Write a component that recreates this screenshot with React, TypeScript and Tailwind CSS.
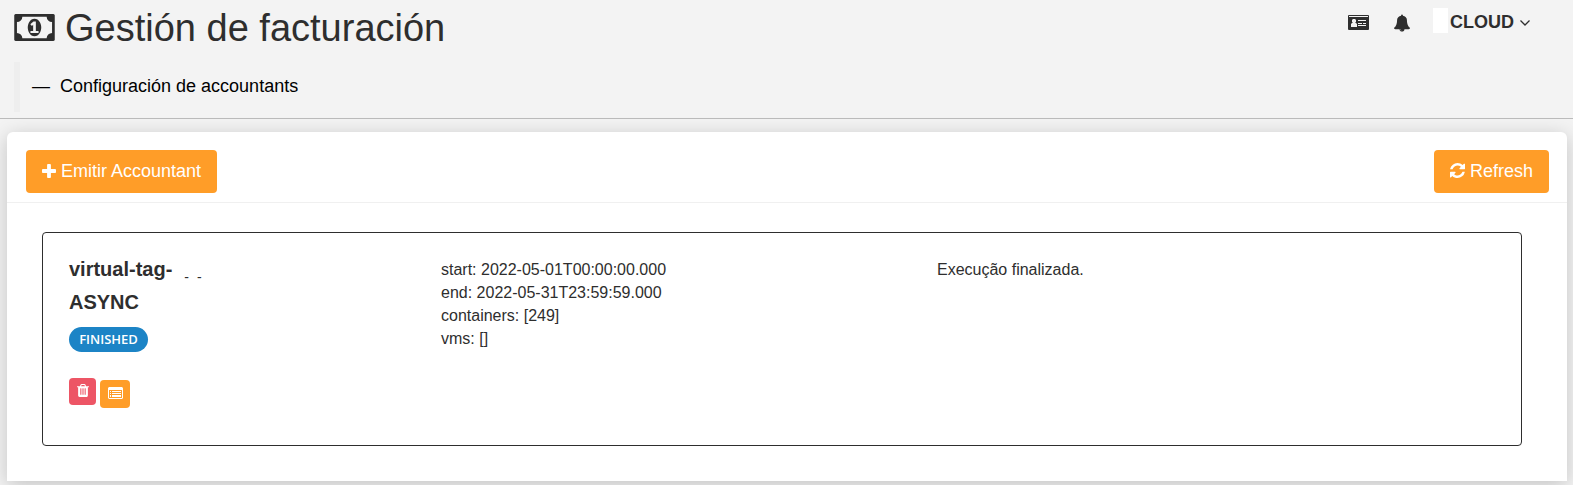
import type { ReactNode } from "react";

type IconProps = { className?: string };

const PATHS = {
  money:
    "M768 1152h384v-96h-128v-448h-114l-148 137 77 80q42-37 55-57h2v288h-128v96zm512-256q0 70-21 142t-59.5 134-101.5 101-138 39-138-39-101.5-101-59.5-134-21-142 21-142 59.5-134 101.5-101 138-39 138 39 101.5 101 59.5 134 21 142zm512 256v-512q-106 0-181-75t-75-181h-1152q0 106-75 181t-181 75v512q106 0 181 75t75 181h1152q0-106 75-181t181-75zm128-832v1152q0 26-19 45t-45 19h-1792q-26 0-45-19t-19-45v-1152q0-26 19-45t45-19h1792q26 0 45 19t19 45z",
  bell: "M912 1696q0-16-16-16-59 0-101.5-42.5t-42.5-101.5q0-16-16-16t-16 16q0 73 51.5 124.5t124.5 51.5q16 0 16-16zm816-288q0 52-38 90t-90 38h-448q0 106-75 181t-181 75-181-75-75-181h-448q-52 0-90-38t-38-90q50-42 91-88t85-119.5 74.5-158.5 50-206 19.5-260q0-152 117-282.5t307-158.5q-8-19-8-39 0-40 28-68t68-28 68 28 28 68q0 20-8 39 190 28 307 158.5t117 282.5q0 139 19.5 260t50 206 74.5 158.5 85 119.5 91 88z",
  refresh:
    "M1639 1056q0 5-1 7-64 268-268 434.5t-478 166.5q-146 0-282.5-55t-243.5-157l-129 129q-19 19-45 19t-45-19-19-45v-448q0-26 19-45t45-19h448q26 0 45 19t19 45-19 45l-137 137q71 66 161 102t187 36q134 0 250-65t186-179q11-17 53-117 8-23 30-23h192q13 0 22.5 9.5t9.5 22.5zm25-800v448q0 26-19 45t-45 19h-448q-26 0-45-19t-19-45 19-45l138-138q-148-137-349-137-134 0-250 65t-186 179q-11 17-53 117-8 23-30 23h-199q-13 0-22.5-9.5t-9.5-22.5v-7q65-268 270-434.5t480-166.5q146 0 284 55.5t245 156.5l130-129q19-19 45-19t45 19 19 45z",
  plus: "M1600 736v192q0 40-28 68t-68 28h-416v416q0 40-28 68t-68 28h-192q-40 0-68-28t-28-68v-416h-416q-40 0-68-28t-28-68v-192q0-40 28-68t68-28h416v-416q0-40 28-68t68-28h192q40 0 68 28t28 68v416h416q40 0 68 28t28 68z",
  trash:
    "M704 1376v-704q0-14-9-23t-23-9h-64q-14 0-23 9t-9 23v704q0 14 9 23t23 9h64q14 0 23-9t9-23zm256 0v-704q0-14-9-23t-23-9h-64q-14 0-23 9t-9 23v704q0 14 9 23t23 9h64q14 0 23-9t9-23zm256 0v-704q0-14-9-23t-23-9h-64q-14 0-23 9t-9 23v704q0 14 9 23t23 9h64q14 0 23-9t9-23zm-544-992h448l-48-117q-7-9-17-11h-317q-10 2-17 11zm928 32v64q0 14-9 23t-23 9h-96v948q0 83-47 143.5t-113 60.5h-832q-66 0-113-58.5t-47-141.5v-952h-96q-14 0-23-9t-9-23v-64q0-14 9-23t23-9h309l70-167q15-37 54-63t79-26h320q40 0 79 26t54 63l70 167h309q14 0 23 9t9 23z",
};

function Glyph({ d, viewBox, className = "" }: IconProps & { d: string; viewBox: string }) {
  return (
    <svg aria-hidden="true" viewBox={viewBox} fill="currentColor" className={`shrink-0 ${className}`}>
      <path d={d} />
    </svg>
  );
}

function IdCardIcon({ className = "" }: IconProps) {
  return (
    <svg aria-hidden="true" viewBox="0 0 21 15" className={`shrink-0 ${className}`}>
      <rect width="21" height="15" rx="1" fill="currentColor" />
      <g fill="#f3f3f3">
        <path d="M1 1h19v1H1z" />
        <path d="M5 4h2l1 1v2l-1 1h1l1 1v3H3V9l1-1h1L4 7V5z" />
        <path d="M10 5h8v1h-8zM10 8h4v1h-4zM15 8h3v1h-3zM10 10h8v1h-8z" />
      </g>
    </svg>
  );
}

function ListAltIcon({ className = "" }: IconProps) {
  return (
    <svg aria-hidden="true" viewBox="0 0 15 12" fill="currentColor" className={`shrink-0 ${className}`}>
      <path fillRule="evenodd" d="M1 0h13l1 1v10l-1 1H1l-1-1V1zM1 3v8h13V3z" />
      <path d="M2 4h1v1H2zM4 4h9v1H4zM2 6h1v1H2zM4 6h9v1H4zM2 8h1v2H2zM4 8h9v2H4z" />
    </svg>
  );
}

function ActionButton({ icon, children }: { icon: ReactNode; children: ReactNode }) {
  return (
    <button
      type="button"
      className="flex h-[43px] items-center gap-[5px] rounded-[4px] bg-[#ff9d28] px-4 pb-[2px] text-lg leading-6 text-white"
    >
      {icon}
      {children}
    </button>
  );
}

export default function App() {
  return (
    <div className="min-h-screen overflow-hidden bg-[#f3f3f3] font-['Liberation_Sans',Arial,sans-serif] text-[#2e2e2e]">
      <header className="border-b border-[#bbbbbb] pr-[43px] pb-[6px] pl-[14px]">
        <div className="flex items-start justify-between">
          <h1 className="flex h-[62px] items-start gap-[10px] pt-2 text-[38px] leading-10">
            <Glyph d={PATHS.money} viewBox="0 256 1920 1280" className="mt-[6px] h-[27px] w-[41px]" />
            Gestión de facturación
          </h1>
          <nav aria-label="Cuenta" className="flex items-start pt-2">
            <a href="#perfil" aria-label="Perfil" className="mt-[7px] mr-[25px]">
              <IdCardIcon className="h-[15px] w-[21px]" />
            </a>
            <a href="#avisos" aria-label="Avisos" className="mt-[6px] mr-[23px]">
              <Glyph d={PATHS.bell} viewBox="64 0 1664 1792" className="h-[18px] w-4" />
            </a>
            <button type="button" className="flex items-start text-lg leading-[25px] font-bold">
              <span className="mr-[2px] h-[25px] w-[15px] bg-white" />
              <span className="pt-[2px]">CLOUD</span>
              <svg aria-hidden="true" viewBox="0 0 10 6" className="mt-3 ml-[6px] h-[6px] w-[10px]" fill="none" stroke="currentColor" strokeWidth="1.3">
                <path d="M.5 .5 5 5 9.500 .5" />
              </svg>
            </button>
          </nav>
        </div>
        <blockquote className="flex h-[50px] items-center gap-[10px] border-l-[6px] border-[#eeeeee] pb-[2px] pl-3 text-lg text-black">
          <span>—</span>
          <span className="font-medium">Configuración de accountants</span>
        </blockquote>
      </header>

      <main className="mx-[6px] mt-[13px] ml-[7px] rounded-t-md bg-white shadow-[0_4px_20px_rgba(0,0,0,0.2)]">
        <div className="flex items-center justify-between border-b border-[#f0f0f0] pt-[18px] pr-[18px] pb-[9px] pl-[19px]">
          <ActionButton icon={<Glyph d={PATHS.plus} viewBox="192 128 1408 1408" className="h-[14px] w-[14px]" />}>
            Emitir Accountant
          </ActionButton>
          <ActionButton icon={<Glyph d={PATHS.refresh} viewBox="128 128 1536 1536" className="h-[15px] w-[15px]" />}>
            Refresh
          </ActionButton>
        </div>

        <div className="pt-[29px] pr-[45px] pb-[35px] pl-[35px]">
          <article className="h-[214px] rounded-[4px] border border-[#2e2e2e] pt-5 pl-[26px]">
            <div className="-mr-9 grid grid-cols-[3fr_4fr_5fr]">
              <div>
                <h2 className="text-xl leading-[33px] font-bold">
                  virtual-tag-
                  <span className="ml-3 inline-flex gap-2 align-[-6px] text-sm leading-[8px] font-normal">
                    <span>-</span>
                    <span>-</span>
                  </span>
                  <br />
                  ASYNC
                </h2>
                <span className="mt-2 flex h-[25px] w-[79px] items-center justify-center rounded-full bg-[#1c84c6] font-['Open_Sans',sans-serif] text-[13px] font-semibold text-white">
                  FINISHED
                </span>
                <div className="mt-[26px] flex items-start gap-1">
                  <button type="button" aria-label="Eliminar" className="flex h-[27px] w-[27px] items-center justify-center rounded-[4px] bg-[#ed5565] pb-[2px] text-white">
                    <Glyph d={PATHS.trash} viewBox="192 128 1408 1536" className="h-[13px] w-3" />
                  </button>
                  <button type="button" aria-label="Detalles" className="mt-[2px] flex h-7 w-[30px] items-center justify-center rounded-[4px] bg-[#ff9d28] pb-[2px] text-white">
                    <ListAltIcon className="h-3 w-[15px]" />
                  </button>
                </div>
              </div>
              <div className="pt-[5px] text-base leading-[23px]">
                <p>start: 2022-05-01T00:00:00.000</p>
                <p>end: 2022-05-31T23:59:59.000</p>
                <p>containers: [249]</p>
                <p>vms: []</p>
              </div>
              <p className="pt-[5px] text-base leading-[23px]">Execução finalizada.</p>
            </div>
          </article>
        </div>
      </main>
    </div>
  );
}
